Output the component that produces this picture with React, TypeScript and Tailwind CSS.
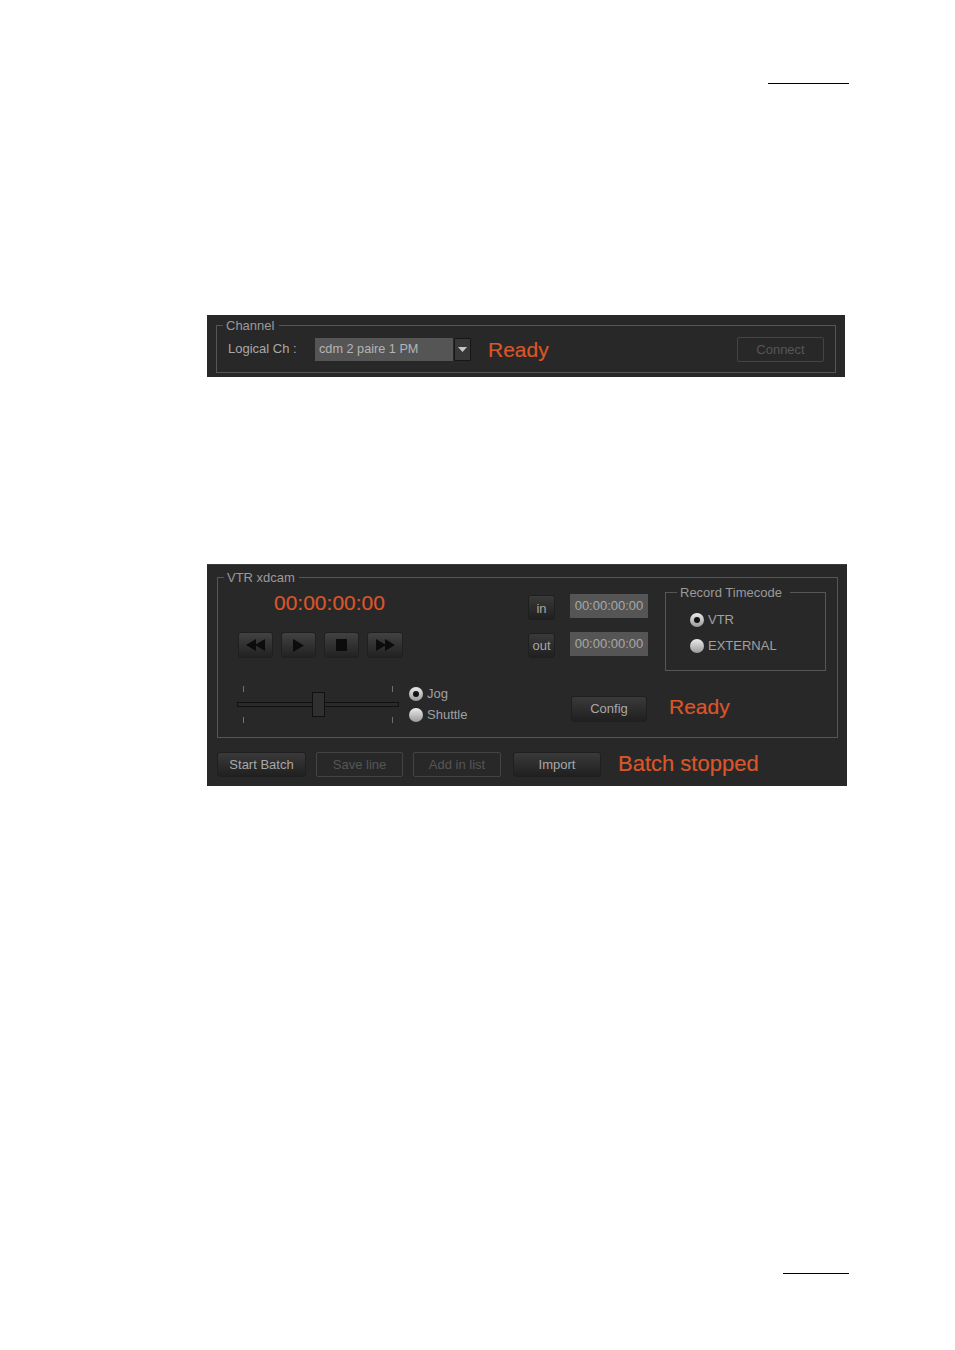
import React from 'react';

const orange = 'text-[#da5629] [-webkit-text-stroke:0.2px_#da5629]';

function ActionButton({ label, className = '' }: { label: string; className?: string }) {
  return (
    <div className={`flex items-center justify-center rounded-[3px] border border-[#1f1f1f] bg-linear-to-b from-[#3a3a3a] to-[#202020] text-[13px] text-[#a8a8a8] ${className}`}>
      {label}
    </div>
  );
}

function DisabledButton({ label, className = '' }: { label: string; className?: string }) {
  return (
    <div className={`flex items-center justify-center rounded-[2px] border border-[#444444] text-[13px] text-[#565656] ${className}`}>
      {label}
    </div>
  );
}

function Radio({ label, checked = false, className = '' }: { label: string; checked?: boolean; className?: string }) {
  return (
    <div className={`flex items-center gap-[4px] text-[13px] text-[#a0a0a0] ${className}`}>
      <div className="flex h-[14px] w-[14px] items-center justify-center rounded-full bg-linear-to-b from-[#ececec] to-[#9a9a9a]">
        {checked && <div className="h-[6px] w-[6px] rounded-full bg-[#111111]" />}
      </div>
      {label}
    </div>
  );
}

function TransportButton({ children, className = '' }: { children: React.ReactNode; className?: string }) {
  return (
    <div className={`flex h-[26px] items-center justify-center rounded-[3px] border border-[#202020] bg-linear-to-b from-[#424242] to-[#222222] ${className}`}>
      {children}
    </div>
  );
}

function TimeField({ className = '' }: { className?: string }) {
  return (
    <div className={`flex h-[24px] w-[78px] items-center justify-center bg-[#555555] text-[13px] text-[#a8a8a8] ${className}`}>
      00:00:00:00
    </div>
  );
}

export default function App() {
  return (
    <div className="h-[1350px] w-[955px] overflow-hidden bg-white font-['Liberation_Sans',sans-serif]">
      <div className="ml-[768px] mt-[83px] h-[1px] w-[81px] bg-black" />

      {/* Channel panel */}
      <div className="ml-[207px] mt-[231px] h-[62px] w-[638px] bg-[#282828] pt-[3px]">
        <fieldset className="ml-[9px] h-[55px] w-[620px] border border-[#565656]">
          <legend className="ml-[6px] pl-[3px] pr-[5px] text-[13px] leading-[15px] text-[#9a9a9a]">Channel</legend>
          <div className="mt-[4px] flex h-[25px] items-center pl-[11px]">
            <div className="-mt-[2px] w-[87px] text-[13px] text-[#a8a8a8]">Logical Ch :</div>
            <div className="flex h-[23px] w-[138px] items-center bg-[#555555] pl-[4px] text-[12.7px] text-[#b4b4b4]">cdm 2 paire 1 PM</div>
            <div className="ml-[1px] flex h-[23px] w-[17px] items-center justify-center rounded-[1px] border border-[#161616] bg-[#383838]">
              <svg width="9" height="5" viewBox="0 0 9 5"><path d="M0 0h9L4.5 5z" fill="#c8c8c8" /></svg>
            </div>
            <div className={`ml-[17px] text-[21px] leading-[24px] ${orange}`}>Ready</div>
            <DisabledButton label="Connect" className="ml-auto mr-[11px] h-[25px] w-[87px]" />
          </div>
        </fieldset>
      </div>

      {/* VTR panel */}
      <div className="ml-[207px] mt-[187px] h-[222px] w-[640px] border-t border-[#3c3c3c] bg-[#282828] pt-[5px]">
        <fieldset className="ml-[10px] h-[168px] w-[621px] border border-[#565656]">
          <legend className="ml-[6px] pl-[3px] pr-[4px] text-[13px] leading-[15px] text-[#9a9a9a]">VTR xdcam</legend>

          <div className="flex h-[86px]">
            <div className="w-[310px]">
              <div className={`ml-[56px] mt-[6px] text-[21px] leading-[24px] ${orange}`}>00:00:00:00</div>
              <div className="ml-[20px] mt-[17px] flex gap-[8px]">
                <TransportButton className="w-[35px]">
                  <svg width="19" height="12" viewBox="0 0 19 12"><path d="M0 6L10 0v12zM9 6L19 0v12z" fill="#0c0c0c" /></svg>
                </TransportButton>
                <TransportButton className="w-[35px]">
                  <svg width="11" height="13" viewBox="0 0 11 13"><path d="M0 0l11 6.5L0 13z" fill="#0c0c0c" /></svg>
                </TransportButton>
                <TransportButton className="w-[35px]">
                  <div className="h-[12px] w-[11px] bg-[#0c0c0c]" />
                </TransportButton>
                <TransportButton className="w-[36px]">
                  <svg width="19" height="12" viewBox="0 0 19 12"><path d="M0 0l10 6L0 12zM9 0l10 6L9 12z" fill="#0c0c0c" /></svg>
                </TransportButton>
              </div>
            </div>

            <div className="w-[137px]">
              <div className="mt-[9px] flex items-start gap-[15px]">
                <ActionButton label="in" className="mt-[1px] h-[25px] w-[27px] pt-[3px]" />
                <TimeField />
              </div>
              <div className="mt-[12px] flex items-start gap-[15px]">
                <ActionButton label="out" className="mt-[1px] h-[25px] w-[27px]" />
                <TimeField />
              </div>
            </div>

            <fieldset className="h-[86px] w-[161px] border border-[#565656]">
              <legend className="ml-[11px] pl-[3px] pr-[8px] text-[13px] leading-[15px] text-[#9a9a9a]">Record Timecode</legend>
              <Radio label="VTR" checked className="ml-[24px] mt-[10px] h-[20px]" />
              <Radio label="EXTERNAL" className="ml-[24px] mt-[6px] h-[20px]" />
            </fieldset>
          </div>

          <div className="flex h-[66px]">
            <div className="relative ml-[19px] mt-[15px] h-[36px] w-[162px]">
              <div className="absolute left-[6px] top-0 h-[6px] w-[1px] bg-[#707070]" />
              <div className="absolute left-[155px] top-0 h-[6px] w-[1px] bg-[#707070]" />
              <div className="absolute left-[6px] top-[31px] h-[6px] w-[1px] bg-[#707070]" />
              <div className="absolute left-[155px] top-[31px] h-[6px] w-[1px] bg-[#707070]" />
              <div className="absolute left-0 right-0 top-[16px] h-[5px] border border-[#111111] bg-[#2a2a2a]" />
              <div className="absolute left-[75px] top-[6px] h-[25px] w-[13px] border border-[#101010] bg-[#303030]" />
            </div>
            <div className="ml-[10px] mt-[12px] w-[162px]">
              <Radio label="Jog" checked className="h-[21px]" />
              <Radio label="Shuttle" className="h-[21px]" />
            </div>
            <ActionButton label="Config" className="mt-[25px] h-[26px] w-[76px]" />
            <div className={`ml-[22px] mt-[24px] text-[21px] leading-[24px] ${orange}`}>Ready</div>
          </div>
        </fieldset>

        <div className="ml-[10px] mt-[14px] flex items-center">
          <ActionButton label="Start Batch" className="h-[25px] w-[89px]" />
          <DisabledButton label="Save line" className="ml-[10px] h-[25px] w-[87px]" />
          <DisabledButton label="Add in list" className="ml-[10px] h-[25px] w-[88px]" />
          <ActionButton label="Import" className="ml-[12px] h-[25px] w-[88px]" />
          <div className={`ml-[17px] -mt-[2px] text-[22px] leading-[24px] ${orange}`}>Batch stopped</div>
        </div>
      </div>

      <div className="ml-[783px] mt-[487px] h-[1px] w-[66px] bg-black" />
    </div>
  );
}
